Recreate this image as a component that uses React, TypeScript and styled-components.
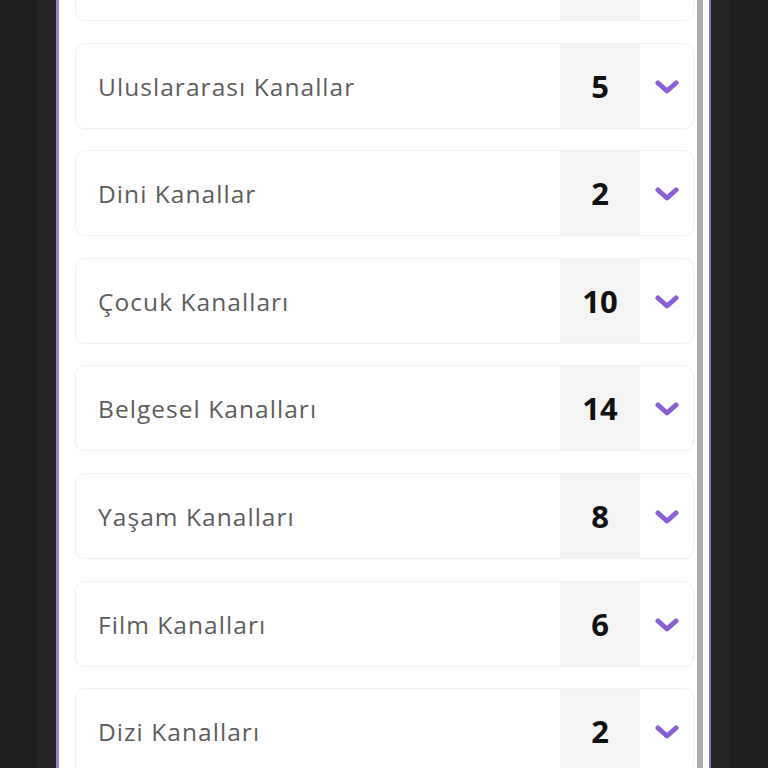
import React from 'react';
import styled, { createGlobalStyle } from 'styled-components';

interface Category {
  name: string;
  count: number | null;
}

// first entry is scrolled almost out of view, only its lower edge shows
const categories: Category[] = [
  { name: '', count: null },
  { name: 'Uluslararası Kanallar', count: 5 },
  { name: 'Dini Kanallar', count: 2 },
  { name: 'Çocuk Kanalları', count: 10 },
  { name: 'Belgesel Kanalları', count: 14 },
  { name: 'Yaşam Kanalları', count: 8 },
  { name: 'Film Kanalları', count: 6 },
  { name: 'Dizi Kanalları', count: 2 },
];

const GlobalStyle = createGlobalStyle`
  html, body {
    margin: 0;
    height: 100%;
    background: #232323;
    overflow: hidden;
  }
  body {
    font-family: "Open Sans", "Liberation Sans", sans-serif;
  }
`;

const Page = styled.div`
  height: 768px;
  display: flex;
  justify-content: center;
  background: linear-gradient(90deg, #1f1f1f 0 37px, #252525 37px calc(100% - 38px), #1f1f1f calc(100% - 38px));
`;

const Frame = styled.div`
  width: 650px;
  height: 768px;
  margin-left: -1px;
  display: flex;
  background: #fff;
  border-left: 3px solid #9b7fd4;
  border-right: 2px solid #8a6cc6;
  overflow: hidden;
`;

const List = styled.div`
  flex: 1;
  display: flex;
  flex-direction: column;
  gap: 21.6px;
  padding: 0 3px 0 16px;
  margin-top: -65px;
`;

const Scrollbar = styled.div`
  width: 6px;
  margin-right: 6px;
  background: #acacac;
`;

const Card = styled.div`
  box-sizing: border-box;
  height: 86px;
  flex: none;
  display: flex;
  align-items: stretch;
  border: 1px solid #f1f1f1;
  border-radius: 10px;
  overflow: hidden;
  background: #fff;
  box-shadow: 0 1px 2px rgba(0, 0, 0, 0.02);
`;

const Label = styled.div`
  flex: 1;
  display: flex;
  align-items: center;
  padding-left: 22px;
  padding-top: 1px;
  font-size: 24.5px;
  color: #5d5d5d;
  letter-spacing: 1.05px;
`;

const Count = styled.div`
  width: 80px;
  display: flex;
  align-items: center;
  justify-content: center;
  background: #f4f4f4;
  font-weight: 700;
  font-size: 31px;
  color: #111;
`;

const Toggle = styled.div`
  width: 53px;
  display: flex;
  align-items: center;
  justify-content: center;
  color: #8b5fd6;
`;

function Chevron () {
  return (
    <svg width='24' height='16' viewBox='0 0 24 16'>
      <polyline
        points='3,5 12,13 21,5'
        fill='none'
        stroke='currentColor'
        strokeWidth='5'
        strokeLinecap='round'
        strokeLinejoin='round'
      />
    </svg>
  );
}

export default function App () {
  return (
    <Page>
      <GlobalStyle />
      <Frame>
        <List>
          {categories.map((c, i) => (
            <Card key={i}>
              <Label>{c.name}</Label>
              <Count>{c.count}</Count>
              <Toggle>{c.count !== null && <Chevron />}</Toggle>
            </Card>
          ))}
        </List>
        <Scrollbar />
      </Frame>
    </Page>
  );
}
